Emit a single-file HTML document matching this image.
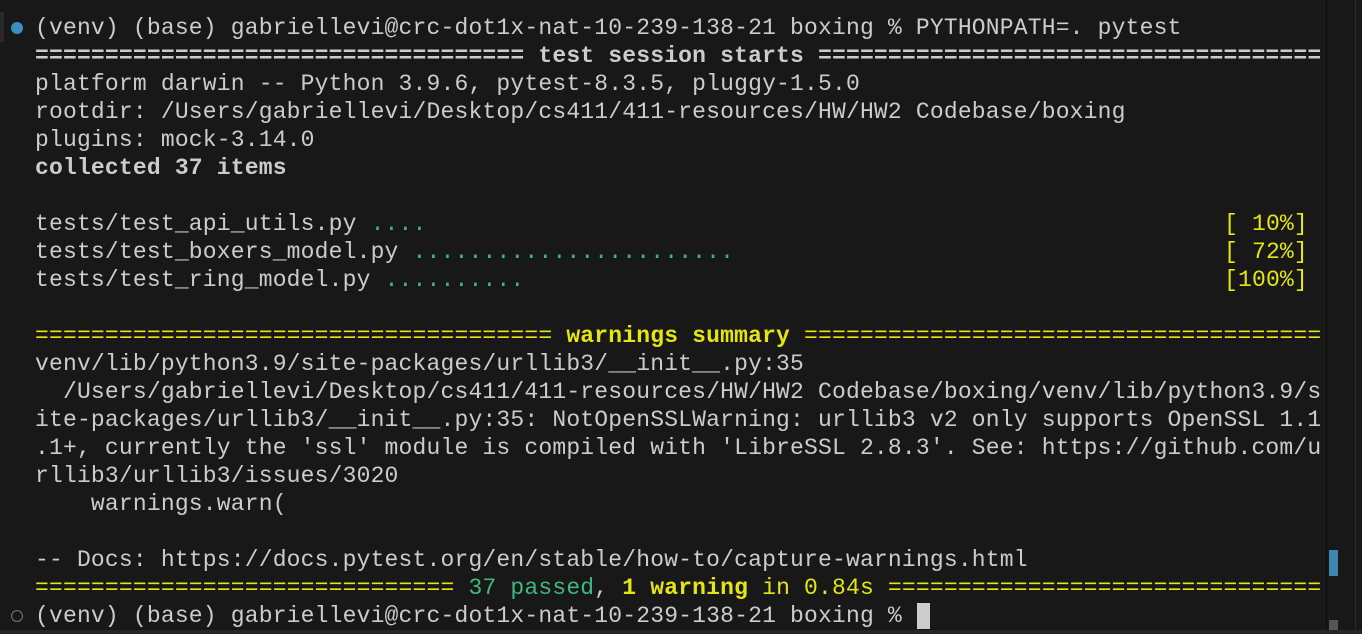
<!DOCTYPE html>
<html><head><meta charset="utf-8"><style>
html,body{margin:0;padding:0;background:#181818;width:1362px;height:634px;overflow:hidden;position:relative}
.l{position:absolute;left:35px;height:28px;line-height:28px;font-family:"Liberation Mono",monospace;font-size:23px;color:#cccccc;white-space:pre;letter-spacing:0.18px;max-width:1285px;overflow:hidden}
.y{color:#e5e510}.g{color:#23d18b}.b{font-weight:bold}.gy{color:#3fb87f}
</style></head><body>
<div style="position:absolute;left:0;top:12px;width:4px;height:30px;background:#2a2a2a"></div>
<div style="position:absolute;left:11px;top:22px;width:12px;height:12px;border-radius:50%;background:#3b8ec0"></div>
<div style="position:absolute;left:11px;top:610px;width:10px;height:10px;border-radius:50%;border:1px solid #777;"></div>
<div class="l" style="top:14px">(venv) (base) gabriellevi@crc-dot1x-nat-10-239-138-21 boxing % PYTHONPATH=. pytest</div>
<div class="l b" style="top:42px">=================================== test session starts =====================================</div>
<div class="l" style="top:70px">platform darwin -- Python 3.9.6, pytest-8.3.5, pluggy-1.5.0</div>
<div class="l" style="top:98px">rootdir: /Users/gabriellevi/Desktop/cs411/411-resources/HW/HW2 Codebase/boxing</div>
<div class="l" style="top:126px">plugins: mock-3.14.0</div>
<div class="l b" style="top:154px">collected 37 items</div>
<div class="l" style="top:210px">tests/test_api_utils.py <span class="gy">....</span></div>
<div class="l" style="top:238px">tests/test_boxers_model.py <span class="gy">.......................</span></div>
<div class="l" style="top:266px">tests/test_ring_model.py <span class="gy">..........</span></div>
<div class="l y" style="top:210px;left:1224px">[ 10%]</div>
<div class="l y" style="top:238px;left:1224px">[ 72%]</div>
<div class="l y" style="top:266px;left:1224px">[100%]</div>
<div class="l y" style="top:322px">===================================== <b>warnings summary</b> ======================================</div>
<div class="l" style="top:350px">venv/lib/python3.9/site-packages/urllib3/__init__.py:35</div>
<div class="l" style="top:378px">  /Users/gabriellevi/Desktop/cs411/411-resources/HW/HW2 Codebase/boxing/venv/lib/python3.9/s</div>
<div class="l" style="top:406px">ite-packages/urllib3/__init__.py:35: NotOpenSSLWarning: urllib3 v2 only supports OpenSSL 1.1</div>
<div class="l" style="top:434px">.1+, currently the 'ssl' module is compiled with 'LibreSSL 2.8.3'. See: https://github.com/u</div>
<div class="l" style="top:462px">rllib3/urllib3/issues/3020</div>
<div class="l" style="top:490px">    warnings.warn(</div>
<div class="l" style="top:546px">-- Docs: https://docs.pytest.org/en/stable/how-to/capture-warnings.html</div>
<div class="l y" style="top:574px">============================== <span class="gy">37 passed</span><span style="color:#ccc">,</span> <b>1 warning</b> in 0.84s ================================</div>
<div class="l" style="top:602px">(venv) (base) gabriellevi@crc-dot1x-nat-10-239-138-21 boxing % </div>
<div style="position:absolute;left:917px;top:603px;width:13px;height:26px;background:#cccccc"></div>
<div style="position:absolute;left:1326px;top:0;width:1px;height:630px;background:#0b0b0b"></div>
<div style="position:absolute;left:1355px;top:0;width:1px;height:630px;background:#2a2a2a"></div>
<div style="position:absolute;left:1329px;top:550px;width:9px;height:26px;background:#3d86ad"></div>
<div style="position:absolute;left:1329px;top:620px;width:9px;height:10px;background:#555"></div>
<div style="position:absolute;left:0;top:630px;width:1362px;height:4px;background:#262626"></div>
</body></html>
